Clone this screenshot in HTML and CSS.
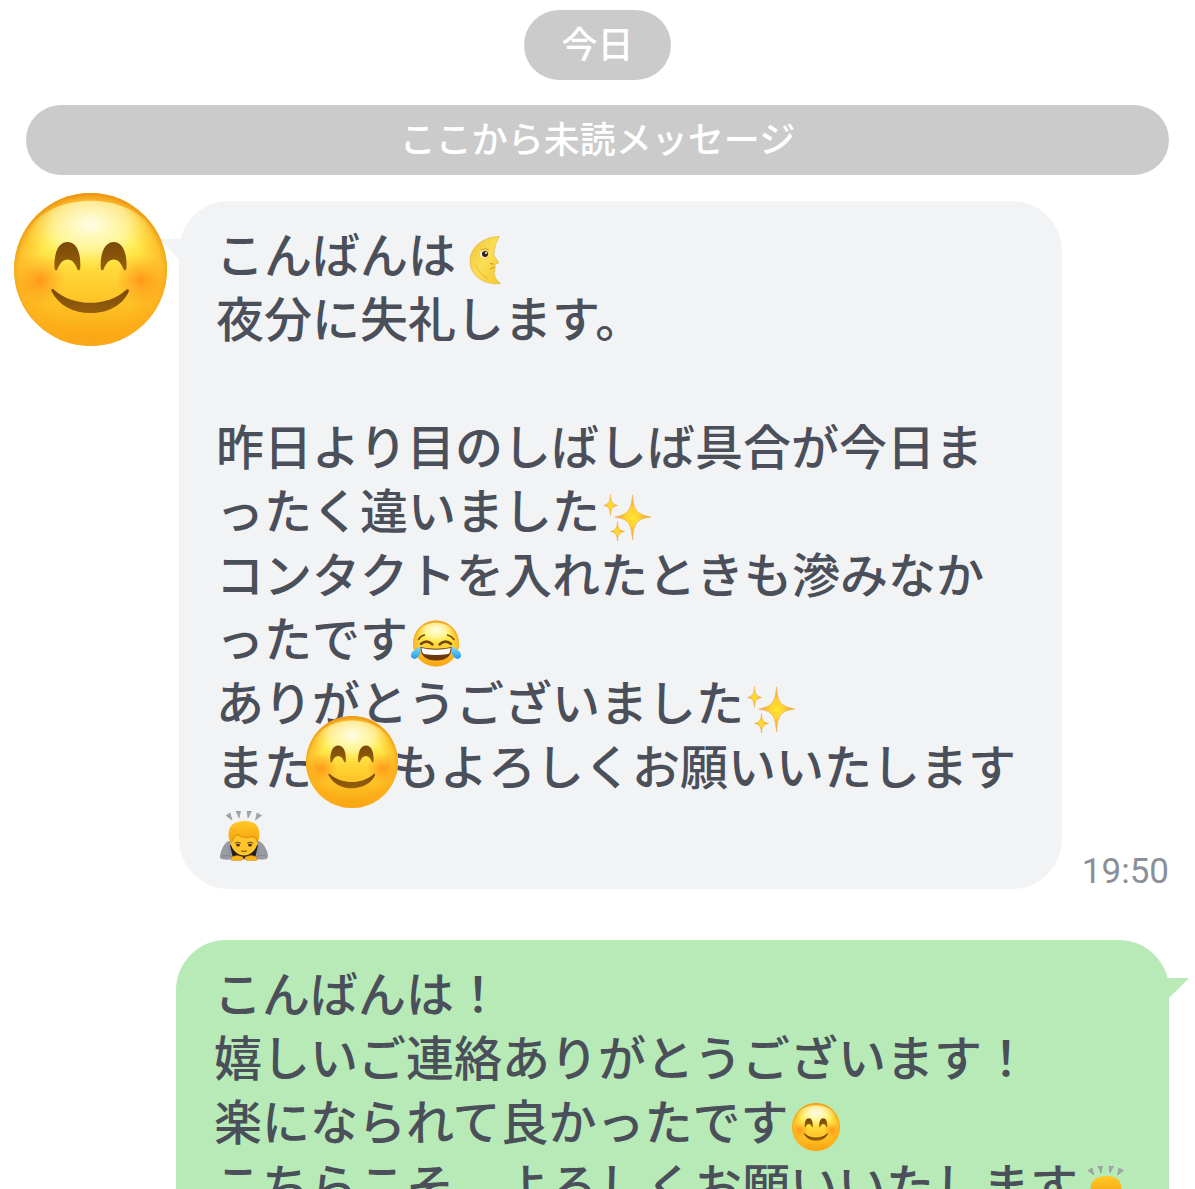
FILE: index.html
```html
<!DOCTYPE html>
<html lang="ja">
<head>
<meta charset="utf-8">
<meta name="viewport" content="width=device-width, initial-scale=1">
<title>トーク</title>
<link rel="stylesheet" href="styles.css">
</head>
<body>
<svg class="sprite" aria-hidden="true">
  <defs>
    <linearGradient id="skin" x1="0" y1="0" x2="0" y2="1">
      <stop offset="0" stop-color="#ffdf66"/>
      <stop offset=".3" stop-color="#ffee50"/>
      <stop offset=".6" stop-color="#ffcf30"/>
      <stop offset="1" stop-color="#f9a30f"/>
    </linearGradient>
    <radialGradient id="rim" cx=".5" cy=".53" r=".53">
      <stop offset=".65" stop-color="#fca312" stop-opacity="0"/>
      <stop offset=".88" stop-color="#fcab1c" stop-opacity=".6"/>
      <stop offset="1" stop-color="#ea900c"/>
    </radialGradient>
    <radialGradient id="shine" cx=".5" cy=".25" r=".7">
      <stop offset="0" stop-color="#fffce8"/>
      <stop offset=".4" stop-color="#fff9b0" stop-opacity=".7"/>
      <stop offset=".7" stop-color="#fff04a" stop-opacity="0"/>
    </radialGradient>
    <radialGradient id="blush">
      <stop offset="0" stop-color="#ff8412" stop-opacity=".75"/>
      <stop offset="1" stop-color="#ff9414" stop-opacity="0"/>
    </radialGradient>
    <linearGradient id="brown" x1="0" y1="0" x2="0" y2="1">
      <stop offset="0" stop-color="#7a490a"/>
      <stop offset="1" stop-color="#96600a"/>
    </linearGradient>
    <linearGradient id="moonfill" x1="0" y1="0" x2="1" y2="1">
      <stop offset="0" stop-color="#f0c431"/>
      <stop offset=".5" stop-color="#fbdd55"/>
      <stop offset="1" stop-color="#f5c92d"/>
    </linearGradient>
    <radialGradient id="starfill">
      <stop offset="0" stop-color="#ffe62e"/>
      <stop offset=".4" stop-color="#ffcf35"/>
      <stop offset="1" stop-color="#f09a3c"/>
    </radialGradient>
    <linearGradient id="tear" x1="0" y1="0" x2="0" y2="1">
      <stop offset="0" stop-color="#8adcff"/>
      <stop offset="1" stop-color="#219de8"/>
    </linearGradient>
    <linearGradient id="hair" x1="0" y1="0" x2="0" y2="1">
      <stop offset="0" stop-color="#ffc928"/>
      <stop offset="1" stop-color="#f5a20c"/>
    </linearGradient>
  </defs>

  <symbol id="head" viewBox="0 0 100 100">
    <circle cx="50" cy="50" r="50" fill="url(#skin)"/>
    <circle cx="50" cy="50" r="50" fill="url(#rim)"/>
    <ellipse cx="50" cy="36" rx="44" ry="31" fill="url(#shine)"/>
  </symbol>

  <symbol id="smile" viewBox="0 0 100 100">
    <use href="#head"/>
    <circle cx="17" cy="57" r="17" fill="url(#blush)"/>
    <circle cx="83" cy="57" r="17" fill="url(#blush)"/>
    <g fill="url(#brown)">
      <path d="M26.500 49C26 39 29 32 35 32S43.800 39 43.300 49C43 51 41.800 51 41.300 49.500C40 46 38 43.500 35 43.500S30 46 28.500 49.500C28 51 26.700 51 26.500 49Z"/>
      <path d="M56.700 49C56.200 39 59.500 32 65.200 32S74 39 73.500 49C73.300 51 72 51 71.500 49.500C70 46 68.200 43.500 65.200 43.500S60.200 46 58.700 49.500C58.200 51 56.900 51 56.700 49Z"/>
      <path d="M24.500 64C24 62.500 25.500 62.500 26.500 63.500C39 74.500 61 74.500 73 63.500C74 62.500 75.500 62.700 75 64.500C71 73.500 61 78.500 50 78.500S29 73.500 24.500 64Z"/>
    </g>
  </symbol>

  <symbol id="joy" viewBox="0 0 100 100">
    <svg x="4" y="2" width="92" height="94"><use href="#head"/></svg>
    <g fill="none" stroke="#75450b" stroke-linecap="round">
      <path d="M15 41Q20 33 27 32M73 32Q81 34 86 41" stroke-width="3"/>
      <path d="M20 50Q31 40 43 51M57 51Q69 40 80 50" stroke-width="5"/>
    </g>
    <path d="M18 56Q50 63 82 56Q81 83 50 83Q20 83 18 56Z" fill="#6d3810"/>
    <path d="M21 58Q50 65 79 58Q79 69 74 70Q50 74 26 70Q21 68 21 58Z" fill="#fff"/>
    <path d="M18 54Q22 68 14 76Q7 83 1 77Q-2 72 3 65Q11 59 18 54Z" fill="url(#tear)"/>
    <path d="M82 54Q78 68 86 76Q93 83 99 77Q102 72 97 65Q89 59 82 54Z" fill="url(#tear)"/>
  </symbol>

  <symbol id="moon" viewBox="0 0 100 100">
    <path d="M81 3C49 3 22 24 22 52C22 81 49 101 83 97C75 91 71 84 70 75C72 73 73 71 71 69L73 64L71 60L79 56Q80 53 76 50L70 41C70 26 75 12 81 3Z" fill="url(#moonfill)" stroke="#dba72b" stroke-width="1"/>
    <path d="M44 30Q52 25 60 30" fill="none" stroke="#d3a02a" stroke-width="2"/>
    <ellipse cx="50" cy="38" rx="8" ry="7" fill="#fff9dc"/>
    <circle cx="52" cy="38" r="6" fill="#30231d"/>
    <circle cx="54" cy="36" r="2" fill="#fff"/>
    <path d="M62 68Q67 67 71 64M62 56Q65 59 69 58" fill="none" stroke="#c78f26" stroke-width="2"/>
    <path d="M35 61Q39 78 58 87" fill="none" stroke="#e6b838" stroke-width="2"/>
  </symbol>

  <symbol id="sparkles" viewBox="0 0 100 100">
    <g fill="url(#starfill)" stroke="#eda642" stroke-width="1">
      <path d="M59 8C61 37 66 46 96 52C66 56 62 65 59 98C56 65 51 56 23 52C51 47 56 37 59 8Z"/>
      <path d="M15 7C16 22 19 26 29 29C19 31 16 35 15 49C14 35 11 31 1 29C11 26 14 22 15 7Z"/>
      <path d="M29 61C30 75 33 78 43 81C33 83 30 87 29 101C28 87 25 83 15 81C25 78 28 75 29 61Z"/>
    </g>
  </symbol>

  <symbol id="bow" viewBox="0 0 100 100">
    <path d="M14 9L22 4L26 18ZM34 0H43L40 14ZM56 0H65L58 14ZM76 4L85 9L73 18Z" fill="#a3a6aa" stroke="#85888d" stroke-width="1"/>
    <path d="M26 58Q12 60 6 76Q0 91 3 95Q6 98 22 97H78Q94 98 97 94Q100 86 93 74Q87 61 74 58Z" fill="#989ba1"/>
    <path d="M5 90Q18 86 30 93M95 90Q82 86 70 93M20 72Q24 79 21 86M80 72Q75 79 79 86" fill="none" stroke="#82868e" stroke-width="2"/>
    <path d="M22 68Q30 66 50 66T78 68L72 95H28Z" fill="#211d1c"/>
    <path d="M22 50Q20 24 50 21Q79 22 78 50Q79 69 70 79Q61 89 50 89T30 79Q21 69 22 50Z" fill="#ffc52b"/>
    <path d="M20 56Q14 22 48 20Q86 18 80 56L77 62Q75 53 68 51Q49 56 37 48Q29 53 25 63Z" fill="url(#hair)"/>
    <path d="M36 47Q48 56 68 51Q75 53 77 62M36 47Q28 52 25 63" fill="none" stroke="#d58d0c" stroke-width="2"/>
    <path d="M32 64Q37 60 43 64M57 64Q63 60 68 64M45 80Q50 82 55 80" fill="none" stroke="#70410d" stroke-width="2" stroke-linecap="round"/>
    <ellipse cx="38" cy="68" rx="4" ry="3" fill="#573514"/>
    <ellipse cx="62" cy="68" rx="4" ry="3" fill="#573514"/>
    <path d="M25 92Q36 86 48 92Q49 99 40 99H25ZM75 92Q64 86 52 92Q51 99 60 99H75Z" fill="#f6b31b" stroke="#d28b0c" stroke-width="1"/>
  </symbol>
</svg>

<main class="chat">
  <div class="notice notice-date">今日</div>
  <div class="notice notice-unread">ここから未読メッセージ</div>

  <article class="message received">
    <svg class="avatar" role="img" aria-label="プロフィール"><use href="#smile"/></svg>
    <div class="bubble">
      <svg class="tail" viewBox="0 0 24 20" aria-hidden="true"><path d="M0 0H24V20H20Z"/></svg>
      <p>こんばんは<svg class="emoji" role="img" aria-label="月"><use href="#moon"/></svg><br>
      夜分に失礼します。<br>
      <br>
      昨日より目のしばしば具合が今日ま<br>
      ったく違いました<svg class="emoji" role="img" aria-label="キラキラ"><use href="#sparkles"/></svg><br>
      コンタクトを入れたときも滲みなか<br>
      ったです<svg class="emoji" role="img" aria-label="嬉し泣き"><use href="#joy"/></svg><br>
      ありがとうございました<svg class="emoji" role="img" aria-label="キラキラ"><use href="#sparkles"/></svg><br>
      また<svg class="emoji-cover" role="img" aria-label="笑顔"><use href="#smile"/></svg>もよろしくお願いいたします<br>
      <svg class="emoji" role="img" aria-label="お辞儀"><use href="#bow"/></svg></p>
    </div>
    <time class="time">19:50</time>
  </article>

  <article class="message sent">
    <div class="bubble">
      <svg class="tail" viewBox="0 0 24 20" aria-hidden="true"><path d="M0 0H24L4 20H0Z"/></svg>
      <p>こんばんは！<br>
      嬉しいご連絡ありがとうございます！<br>
      楽になられて良かったです<svg class="emoji emoji-face" role="img" aria-label="笑顔"><use href="#smile"/></svg><br>
      こちらこそ、よろしくお願いいたします<svg class="emoji" role="img" aria-label="お辞儀"><use href="#bow"/></svg></p>
    </div>
  </article>
</main>
</body>
</html>
```
FILE: styles.css
```css
* {
  box-sizing: border-box;
}

body {
  margin: 0;
  background: #fff;
  color: #4a4f5a;
  font-family: "Noto Sans CJK JP", "Noto Sans", sans-serif;
  font-weight: 500;
}

.sprite {
  position: absolute;
  width: 0;
  height: 0;
}

.chat {
  display: flex;
  flex-direction: column;
  height: 100vh;
  overflow: hidden;
  padding: 10px 26px 0 14px;
}

.chat > * {
  flex-shrink: 0;
}

.notice {
  padding: 0 37px 6px;
  border-radius: 35px;
  background: #cbcbcb;
  color: #fff;
  font-size: 36px;
  line-height: 64px;
  text-align: center;
}

.notice-date {
  align-self: center;
  margin-left: 12px;
}

.notice-unread {
  margin: 25px 0 0 12px;
}

.message {
  display: flex;
}

.received {
  margin-top: 26px;
}

.sent {
  margin: 51px 0 0 162px;
}

.avatar {
  position: relative;
  z-index: 1;
  flex: none;
  width: 153px;
  height: 153px;
  margin: -8px 12px 0 0;
}

.bubble {
  position: relative;
  flex: 1;
  min-width: 0;
  padding: 19px 36px 29px 37px;
  border-radius: 50px;
  background: #f2f3f5;
  font-size: 48px;
  line-height: 64px;
  white-space: nowrap;
}

.bubble p {
  margin: 0;
}

.sent .bubble {
  padding-left: 38px;
  background: #b7eab7;
}

.tail {
  position: absolute;
  top: 38px;
  width: 24px;
  height: 20px;
}

.received .tail {
  left: -20px;
  fill: #f2f3f5;
}

.sent .tail {
  right: -20px;
  fill: #b7eab7;
}

.emoji {
  width: 50px;
  height: 50px;
  margin: -8px 3px;
  vertical-align: middle;
}

.emoji-face {
  width: 48px;
  height: 48px;
}

.emoji-cover {
  position: relative;
  width: 92px;
  height: 92px;
  margin: -34px -6px -14px;
  vertical-align: middle;
}

.time {
  align-self: flex-end;
  margin-left: 20px;
  color: #8a8f99;
  font-family: Roboto, sans-serif;
  font-size: 35px;
  font-weight: 400;
  line-height: 34px;
}
```
